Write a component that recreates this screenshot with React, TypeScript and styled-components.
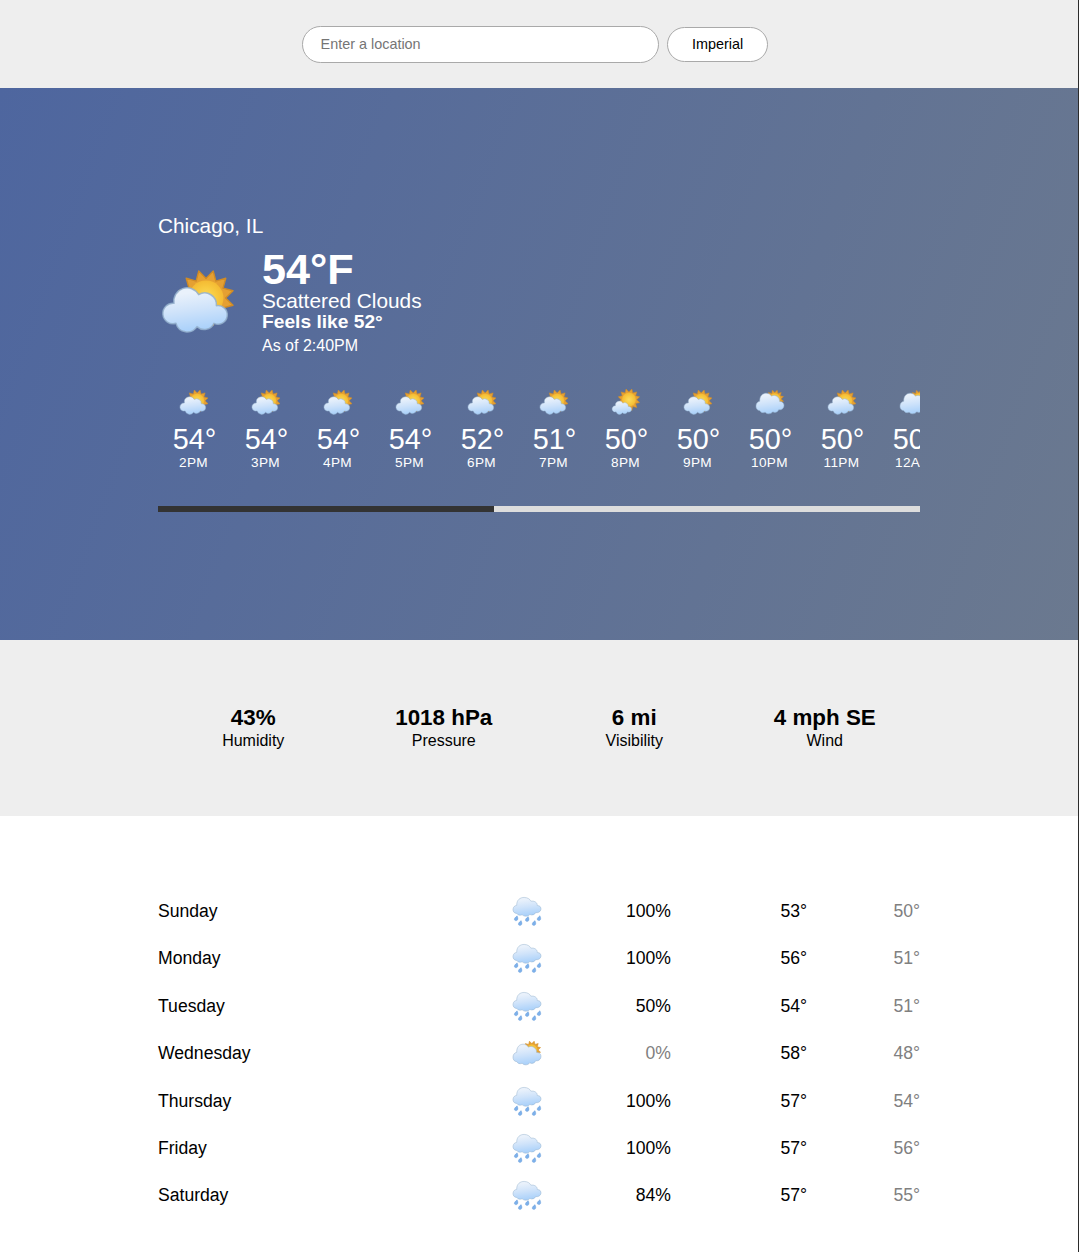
import React, { useId } from "react";
import styled, { createGlobalStyle } from "styled-components";

const Global = createGlobalStyle`
  *, *::before, *::after { box-sizing: border-box; }
  body {
    margin: 0;
    background: #fff;
    color: #000;
    font-family: "Liberation Sans", Arial, sans-serif;
    font-size: 16px;
  }
`;

const Page = styled.div`
  width: 1079px;
  height: 1252px;
  overflow: hidden;
  border-right: 1px solid #2b2b2b;
  display: flex;
  flex-direction: column;
`;

const Header = styled.header`
  height: 88px;
  flex: none;
  background: #eee;
  display: flex;
  align-items: center;
  justify-content: center;
  gap: 8px;
  padding: 0 8px 0 0;
`;

const Search = styled.input`
  width: 357px;
  height: 37px;
  padding: 0 17.6px;
  border: 1px solid #a9a9a9;
  border-radius: 19px;
  background: #fff;
  font: 14.4px "Liberation Sans", Arial, sans-serif;
  outline: none;
  &::placeholder { color: #757575; }
`;

const UnitButton = styled.button`
  width: 101px;
  height: 35px;
  padding: 0;
  border: 1px solid #a9a9a9;
  border-radius: 18px;
  background: #fff;
  color: #000;
  font: 14.4px "Liberation Sans", Arial, sans-serif;
`;

const Hero = styled.section`
  height: 552px;
  flex: none;
  padding: 126px 158px 0;
  color: #fff;
  background: linear-gradient(110deg, #4e669f, #6b798f);
`;

const Line = styled.div<{ $size: number; $height: number; $bold?: boolean }>`
  font-size: ${(p) => p.$size}px;
  line-height: ${(p) => p.$height}px;
  font-weight: ${(p) => (p.$bold ? 700 : 400)};
  white-space: nowrap;
`;

const Current = styled.div`
  display: flex;
  margin-top: 8px;
  height: 112px;
`;

const Icon = styled.svg<{ $size: number }>`
  display: block;
  flex: none;
  width: ${(p) => p.$size}px;
  height: ${(p) => p.$size}px;
`;

const CurrentIcon = styled.div`
  width: 104px;
  padding-top: 15px;
`;

const Hours = styled.div`
  display: flex;
  overflow: hidden;
  height: 148px;
  padding-top: 28px;
`;

const Hour = styled.div`
  flex: none;
  width: 72px;
  display: flex;
  flex-direction: column;
  align-items: center;
`;

const HourTemp = styled.div`
  font-size: 28.8px;
  line-height: 32px;
  margin-top: 5px;
  padding-left: 1px;
`;

const HourLabel = styled.div`
  font-size: 13.6px;
  line-height: 16px;
  letter-spacing: 0.35px;
  padding-right: 1px;
`;

const Track = styled.div`
  height: 6px;
  background: #ddd;
`;

const Thumb = styled.div`
  width: 336px;
  height: 6px;
  background: #333;
`;

const Stats = styled.section`
  height: 176px;
  flex: none;
  padding: 65px 158px 0;
  background: #eee;
  display: grid;
  grid-template-columns: repeat(4, 1fr);
  text-align: center;
`;

const Days = styled.section`
  padding: 71.8px 158px 0;
`;

const Day = styled.div`
  display: grid;
  grid-template-columns: 338px 62px 113px 136px 113px;
  align-items: center;
  height: 47.4px;
  font-size: 17.6px;
`;

const Cell = styled.div<{ $align?: string; $muted?: boolean }>`
  text-align: ${(p) => p.$align ?? "left"};
  color: ${(p) => (p.$muted ? "#808080" : "#000")};
`;

const IconCell = styled.div`
  display: flex;
  justify-content: center;
  padding-bottom: 1px;
`;

type Kind = "partly" | "sunny" | "cloudy" | "rain";

const CLOUD =
  "M57 124A39.8 39.8 0 0 1 131 98A35 35 0 0 1 184 131A28 28 0 1 1 177 184" +
  "A32 32 0 0 1 126 194A35 35 0 0 1 63 184A30.7 30.7 0 1 1 57 124Z";

/* Wide base shared by the two larger clouds */
const BASE =
  "C227 113 237 131 233 150C229 169 212 178 194 175C186 194 167 200 150 191" +
  "C136 209 108 211 93 194C76 201 59 196 53 182C34 181 23 167 24 147C25 126 37 115 52 112Z";

const BIG_CLOUD = "M52 112C50 66 78 43 108 44C135 45 151 59 158 76C186 71 208 90 206 114" + BASE;

const LOW_CLOUD = "M52 112C50 74 72 51 100 51C119 51 133 60 140 73C163 58 204 78 201 113" + BASE;

const SUNS: Partial<Record<Kind, { x: number; y: number; tip: number }>> = {
  partly: { x: 153, y: 108, tip: 86 },
  sunny: { x: 151, y: 100, tip: 85 },
  cloudy: { x: 165, y: 94, tip: 70 },
};

const CLOUDS: Record<Kind, { d: string; transform?: string }> = {
  partly: { d: CLOUD },
  sunny: { d: CLOUD, transform: "translate(6.5 51) scale(.76)" },
  cloudy: { d: LOW_CLOUD },
  rain: { d: BIG_CLOUD, transform: "translate(0 -23) scale(1 .87)" },
};

const DROPS = [
  [46, 172],
  [76, 208],
  [129, 178],
  [180, 208],
  [217, 171],
];

function spikes(x: number, y: number, tip: number) {
  return Array.from({ length: 24 }, (_, i) => {
    const r = i % 2 === 0 ? tip : tip * 0.7;
    const a = ((i * 15 + 15) * Math.PI) / 180;
    return `${(x + r * Math.sin(a)).toFixed(1)},${(y - r * Math.cos(a)).toFixed(1)}`;
  }).join(" ");
}

function Weather({ kind, size }: { kind: Kind; size: number }) {
  const id = useId().replace(/[^a-zA-Z0-9]/g, "");
  const sun = SUNS[kind];
  const cloud = CLOUDS[kind];
  return (
    <Icon $size={size} viewBox="9 -3 240 240" aria-hidden>
      <defs>
        <linearGradient id={`c${id}`} x1="0.35" y1="0" x2="0.55" y2="1">
          <stop offset="0.12" stopColor="#e9f1fb" />
          <stop offset="0.5" stopColor="#cfe3fa" />
          <stop offset="1" stopColor="#a6cffa" />
        </linearGradient>
        <radialGradient id={`s${id}`}>
          <stop offset="0" stopColor="#fbdc62" />
          <stop offset="0.6" stopColor="#f8ca40" />
          <stop offset="1" stopColor="#f4ba33" />
        </radialGradient>
      </defs>
      {sun && (
        <>
          <polygon
            points={spikes(sun.x, sun.y, sun.tip - 2)}
            fill="#e5a032"
            stroke="#cf8b26"
            strokeWidth="4"
            strokeLinejoin="round"
          />
          <circle cx={sun.x} cy={sun.y} r={sun.tip * 0.61} fill={`url(#s${id})`} />
        </>
      )}
      <path
        d={cloud.d}
        transform={cloud.transform}
        fill={`url(#c${id})`}
        stroke="#94b0cc"
        strokeOpacity="0.85"
        strokeWidth="4.5"
        strokeLinejoin="round"
      />
      {kind === "rain" &&
        DROPS.map(([x, y]) => (
          <path
            key={x}
            d="M9-19C15-6 17 4 13 11C8 20-6 20-11 12C-15 3-8-5 9-19Z"
            transform={`translate(${x} ${y})`}
            fill="#7cb0ea"
            stroke="#5f96d6"
            strokeWidth="2.5"
          />
        ))}
    </Icon>
  );
}

const hours: [string, number, Kind][] = [
  ["2PM", 54, "partly"],
  ["3PM", 54, "partly"],
  ["4PM", 54, "partly"],
  ["5PM", 54, "partly"],
  ["6PM", 52, "partly"],
  ["7PM", 51, "partly"],
  ["8PM", 50, "sunny"],
  ["9PM", 50, "partly"],
  ["10PM", 50, "cloudy"],
  ["11PM", 50, "partly"],
  ["12AM", 50, "cloudy"],
];

const stats = [
  ["43%", "Humidity"],
  ["1018 hPa", "Pressure"],
  ["6 mi", "Visibility"],
  ["4 mph SE", "Wind"],
];

const days: [string, Kind, number, number, number][] = [
  ["Sunday", "rain", 100, 53, 50],
  ["Monday", "rain", 100, 56, 51],
  ["Tuesday", "rain", 50, 54, 51],
  ["Wednesday", "cloudy", 0, 58, 48],
  ["Thursday", "rain", 100, 57, 54],
  ["Friday", "rain", 100, 57, 56],
  ["Saturday", "rain", 84, 57, 55],
];

export default function App() {
  return (
    <>
      <Global />
      <Page>
        <Header>
          <Search placeholder="Enter a location" />
          <UnitButton>Imperial</UnitButton>
        </Header>
        <Hero>
          <Line $size={20.8} $height={24}>Chicago, IL</Line>
          <Current>
            <CurrentIcon>
              <Weather kind="partly" size={80} />
            </CurrentIcon>
            <div>
              <Line $size={43.2} $height={46} $bold>54°F</Line>
              <Line $size={20.8} $height={18}>Scattered Clouds</Line>
              <Line $size={19.2} $height={24} $bold>Feels like 52°</Line>
              <Line $size={16} $height={24}>As of 2:40PM</Line>
            </div>
          </Current>
          <Hours>
            {hours.map(([label, temp, kind]) => (
              <Hour key={label}>
                <Weather kind={kind} size={32} />
                <HourTemp>{temp}°</HourTemp>
                <HourLabel>{label}</HourLabel>
              </Hour>
            ))}
          </Hours>
          <Track>
            <Thumb />
          </Track>
        </Hero>
        <Stats>
          {stats.map(([value, label]) => (
            <div key={label}>
              <Line $size={22.4} $height={26} $bold>{value}</Line>
              <Line $size={16} $height={19}>{label}</Line>
            </div>
          ))}
        </Stats>
        <Days>
          {days.map(([name, kind, rain, high, low]) => (
            <Day key={name}>
              <Cell>{name}</Cell>
              <IconCell>
                <Weather kind={kind} size={32} />
              </IconCell>
              <Cell $align="right" $muted={rain === 0}>{rain}%</Cell>
              <Cell $align="right">{high}°</Cell>
              <Cell $align="right" $muted>{low}°</Cell>
            </Day>
          ))}
        </Days>
      </Page>
    </>
  );
}
